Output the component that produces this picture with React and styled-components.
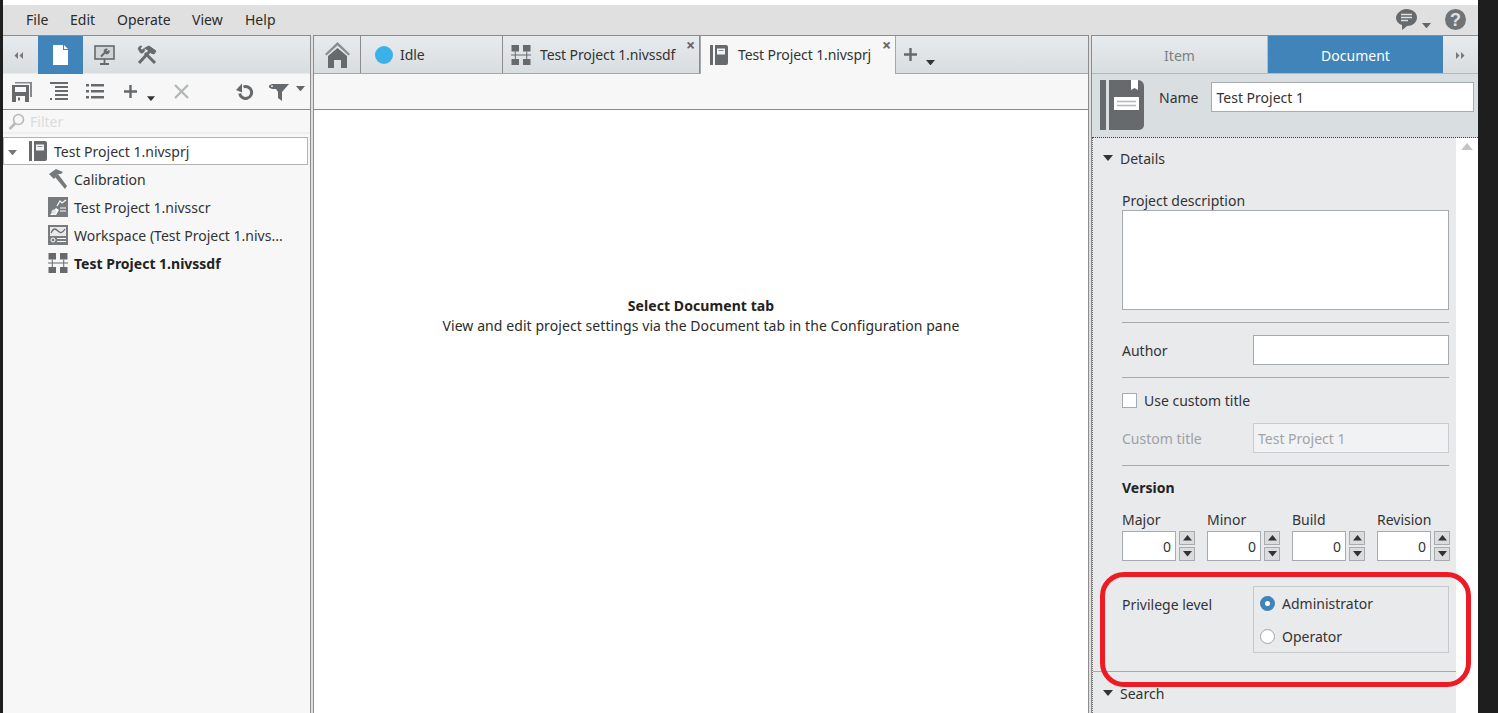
import React from 'react'
import styled, { createGlobalStyle } from 'styled-components'

const GlobalStyle = createGlobalStyle`
  html, body {
    margin: 0;
    padding: 0;
    height: 713px;
    overflow: hidden;
    background: #1e1e1e;
  }
  * { box-sizing: border-box; }
  body {
    font-family: "Noto Sans", "Open Sans", sans-serif;
    font-size: 14px;
    color: #333;
  }
`

const Window = styled.div`
  width: 1475px;
  height: 713px;
  margin-left: 3px;
  padding-top: 5px;
  background: #fff;
  display: flex;
  flex-direction: column;
  overflow: hidden;
  position: relative;
`

const MenuBar = styled.div`
  height: 30px;
  flex: none;
  background: #e0e0e0;
  display: flex;
  align-items: center;
  padding: 0 0 1px 23px;
`

const MenuItem = styled.span`
  width: ${p => p.$w}px;
  color: #2b2b2b;
`

const MenuRight = styled.div`
  margin-left: auto;
  display: flex;
  align-items: center;
  padding-right: 12px;
`

const Panes = styled.div`
  flex: 1;
  min-height: 0;
  display: flex;
  background: #e0e0e0;
`

const Pane = styled.div`
  width: ${p => p.$w}px;
  flex: none;
  border-top: 1px solid #8c8c8c;
  border-left: ${p => (p.$left ? '1px solid #8c8c8c' : 'none')};
  border-right: ${p => (p.$right ? '1px solid #8c8c8c' : 'none')};
  background: ${p => p.$bg};
  display: flex;
  flex-direction: column;
`

const Splitter = styled.div`
  width: 2px;
  flex: none;
`

const TabRow = styled.div`
  height: 38px;
  flex: none;
  display: flex;
  background: linear-gradient(#e8ebed, #d8dde0);
  border-bottom: 1px solid ${p => p.$line || '#a4a8ab'};
`

const NavTab = styled.div`
  width: ${p => p.$w}px;
  height: 38px;
  flex: none;
  display: flex;
  align-items: center;
  justify-content: center;
  padding-right: ${p => p.$shift || 0}px;
  background: ${p => (p.$on ? '#4084b9' : 'transparent')};
`

const DocTab = styled.div`
  width: ${p => p.$w}px;
  height: ${p => (p.$on ? '38px' : '37px')};
  flex: none;
  display: flex;
  align-items: center;
  gap: ${p => p.$gap || 8}px;
  padding: 0 0 ${p => (p.$on ? '1px' : 0)} ${p => p.$pad}px;
  background: ${p => (p.$on ? '#f7f7f7' : 'transparent')};
  border-right: 1px solid ${p => (p.$on ? '#a4a8ab' : '#8c8c8c')};
  border-left: ${p => (p.$on ? '1px solid #a4a8ab' : 'none')};
  letter-spacing: -0.1px;
  position: relative;
  z-index: 1;
`

const CloseMark = styled.span`
  position: absolute;
  top: 3px;
  right: 4px;
  font-size: 16px;
  line-height: 13px;
  font-weight: 700;
  color: #666;
`

const PropTab = styled.div`
  width: ${p => p.$w}px;
  flex: none;
  display: flex;
  align-items: center;
  justify-content: center;
  padding-top: 1px;
  background: ${p => (p.$on ? '#4084b9' : 'transparent')};
  color: ${p => (p.$on ? '#fff' : '#7b7f82')};
  border-right: ${p => (p.$line ? '1px solid #b9bdc0' : 'none')};
`

const Toolbar = styled.div`
  height: 36px;
  flex: none;
  background: #f7f7f7;
  border-bottom: 1px solid #8c8c8c;
  display: flex;
  align-items: center;
`

const ToolSlot = styled.span`
  width: ${p => p.$w}px;
  flex: none;
  display: flex;
  justify-content: center;
  align-items: center;
  margin-top: ${p => p.$drop || 0}px;
`

const FilterWrap = styled.span`
  display: flex;
  align-items: center;
  gap: 7px;
  margin-left: -13px;
`

const FilterRow = styled.div`
  height: 24px;
  flex: none;
  display: flex;
  align-items: center;
  gap: 5px;
  padding-left: 5px;
  background: #f7f7f7;
  border-bottom: 2px solid #efefef;
  color: #dcdcdc;
`

const Tree = styled.div`
  flex: 1;
  padding-top: 3px;
  background: #f7f7f7;
`

const RootRow = styled.div`
  height: 28px;
  width: 305px;
  display: flex;
  align-items: center;
  padding-left: 4px;
  background: #fff;
  border: 1px solid #b4b4b4;
`

const RootName = styled.span`
  margin-left: 7px;
`

const TreeRow = styled.div`
  height: 28px;
  display: flex;
  align-items: center;
  gap: 6px;
  padding-left: 45px;
  font-weight: ${p => (p.$bold ? 700 : 400)};
  color: ${p => (p.$bold ? '#222' : '#333')};
`

const Center = styled.div`
  flex: 1;
  background: #fff;
  display: flex;
  flex-direction: column;
  align-items: center;
  padding-top: 186px;
  line-height: 20px;
  color: #2b2b2b;
  letter-spacing: 0.08px;
`

const Heading = styled.div`
  font-weight: 700;
  color: #222;
`

const PropHeader = styled.div`
  height: 64px;
  flex: none;
  display: flex;
  background: #d9dee0;
  border-bottom: 1px dotted #444;
  padding: 6px 4px 0 8px;
`

const NameLabel = styled.span`
  margin: 8px 13px 0 15px;
  color: #333;
`

const NameBox = styled.div`
  flex: 1;
  height: 30px;
  margin-top: 2px;
  background: #fff;
  border: 1px solid #a8abae;
  line-height: 29px;
  padding: 0 4px;
`

const TextBox = styled.div`
  width: ${p => (p.$w ? `${p.$w}px` : 'auto')};
  height: ${p => p.$h || 30}px;
  flex: ${p => (p.$w ? 'none' : 1)};
  background: ${p => (p.$off ? '#f1f2f4' : '#fff')};
  border: 1px solid ${p => (p.$off ? '#c9cdd0' : '#a8abae')};
  color: ${p => (p.$off ? '#a0a4a8' : '#333')};
  line-height: ${p => (p.$h || 30) - 1}px;
  padding: 0 4px;
  text-align: ${p => (p.$num ? 'right' : 'left')};
`

const PropBody = styled.div`
  flex: 1;
  min-height: 0;
  display: flex;
  overflow: hidden;
`

const FormColumn = styled.div`
  width: 364px;
  flex: none;
  background: #e9eaec;
  border-left: 1px dotted #777;
`

const ScrollTrack = styled.div`
  flex: 1;
  background: #fff;
  display: flex;
  justify-content: center;
  padding-top: 5px;
`

const Disclosure = styled.div`
  height: 40px;
  display: flex;
  align-items: center;
  gap: 7px;
  padding-left: 10px;
`

const Form = styled.div`
  padding: 12px 7px 0 29px;
`

const Label = styled.div`
  height: 20px;
  line-height: 22px;
  color: ${p => (p.$off ? '#9da1a5' : '#333')};
`

const Rule = styled.div`
  height: 1px;
  background: #a8a9ab;
  margin: 12px 0;
`

const FieldRow = styled.div`
  display: grid;
  grid-template-columns: 131px 196px;
  align-items: center;
`

const CheckRow = styled.div`
  height: 24px;
  margin: -2px 0 11px;
  display: flex;
  align-items: center;
  gap: 7px;
`

const CheckBox = styled.span`
  width: 15px;
  height: 15px;
  background: #fff;
  border: 1px solid #a8abae;
`

const VersionTitle = styled.div`
  height: 20px;
  line-height: 22px;
  font-weight: 700;
  color: #222;
  margin-bottom: 12px;
  margin-top: -1px;
`

const VersionGrid = styled.div`
  display: grid;
  grid-template-columns: repeat(4, 73px);
  column-gap: 12px;
`

const SpinWrap = styled.div`
  display: flex;
  gap: 3px;
  margin-top: 2px;
`

const SpinButtons = styled.div`
  width: 16px;
  flex: none;
  display: flex;
  flex-direction: column;
  justify-content: space-between;
`

const SpinButton = styled.span`
  height: 14px;
  background: #dadcde;
  border: 1px solid #a8abae;
  display: flex;
  align-items: center;
  justify-content: center;
`

const PrivilegeRow = styled.div`
  display: grid;
  grid-template-columns: 131px 196px;
  margin-top: 25px;
`

const PrivilegeLabel = styled(Label)`
  margin-top: 8px;
`

const RadioGroup = styled.div`
  height: 67px;
  border: 1px solid #c6c9cc;
  padding: 0 0 0 6px;
`

const RadioRow = styled.div`
  height: 33px;
  display: flex;
  align-items: center;
  gap: 7px;
`

const Radio = styled.span`
  width: 15px;
  height: 15px;
  border-radius: 50%;
  background: #fff;
  border: ${p => (p.$on ? '5px solid #4084b9' : '1px solid #a0a3a6')};
`

const FullRule = styled.div`
  height: 1px;
  background: #a8a9ab;
  margin-top: 18px;
`

const SearchHead = styled(Disclosure)`
  padding-top: 2px;
`

const Callout = styled.div`
  position: absolute;
  left: 1097px;
  top: 572px;
  width: 371px;
  height: 115px;
  border: 5px solid #ed1c24;
  border-radius: 24px;
  pointer-events: none;
`

const StatusDot = styled.span`
  width: 18px;
  height: 18px;
  border-radius: 50%;
  background: #3cb0e8;
`

const Grey = '#666a6d'

const Caret = ({ size = 10, fill = '#333', up, style }) => (
  <svg width={size} height={size * 0.6} viewBox="0 0 10 6" style={style}>
    <path d={up ? 'M0 6h10L5 0z' : 'M0 0h10L5 6z'} fill={fill} />
  </svg>
)

const PageIcon = () => (
  <svg width="17" height="20" viewBox="0 0 17 20">
    <path d="M1 0h10v5h5v15H1z" fill="#fff" />
    <path d="M12 0l4 4h-4z" fill="#fff" />
  </svg>
)

const MonitorIcon = () => (
  <svg width="21" height="20" viewBox="0 0 21 20" fill="none" stroke={Grey}>
    <rect x="1" y="1" width="19" height="13" strokeWidth="1.600" fill="#d0d4d6" />
    <path d="M6 19h9M10.500 14v5" strokeWidth="1.800" />
    <path d="M7 11.500l4-4" strokeWidth="2" />
    <path d="M10 7a2.500 2.500 0 0 1 3.500-3l-1 1.500 1 1L15 5a2.500 2.500 0 0 1-4 3z" fill={Grey} strokeWidth="0.500" />
  </svg>
)

const ToolsIcon = () => (
  <svg width="20" height="20" viewBox="0 0 20 20" fill="none" stroke={Grey}>
    <path d="M2 18L13 6" strokeWidth="3" />
    <path d="M8 3l4-2 7 5-2 3-3-1-2-2z" fill={Grey} strokeWidth="1" />
    <path d="M18 18L8 8" strokeWidth="3" />
    <path d="M1 4a3.500 3.500 0 0 1 4-3L3.500 3.500 5 5l2.500-2a3.500 3.500 0 0 1-4 5z" fill={Grey} strokeWidth="0.500" />
  </svg>
)

const SaveIcon = () => (
  <svg width="20" height="20" viewBox="0 0 20 20" fill="none">
    <path d="M3 0h17v15h-2V1.500H3z" fill="#85898c" />
    <path d="M0 3h17v17H0z" fill={Grey} />
    <path d="M3 5h11v5H3zM4 14h9v6H4z" fill="#f7f7f7" />
    <rect x="6" y="15.500" width="2" height="3" fill={Grey} />
  </svg>
)

const IndentListIcon = () => (
  <svg width="18" height="19" viewBox="0 0 18 19" fill={Grey}>
    <path d="M0 0h18v2H0zM5 4h13v2H5zM5 8h13v2H5zM5 12h13v2H5zM0 16h2v2H0zM5 16h13v2H5z" />
  </svg>
)

const ListIcon = () => (
  <svg width="18" height="15" viewBox="0 0 18 15" fill={Grey}>
    <path d="M0 0h3v2.500H0zM5 0h13v2.500H5zM0 6h3v2.500H0zM5 6h13v2.500H5zM0 12h3v2.500H0zM5 12h13v2.500H5z" />
  </svg>
)

const PlusIcon = () => (
  <svg width="13" height="13" viewBox="0 0 13 13" fill={Grey}>
    <path d="M5.300 0h2.400v5.300H13v2.400H7.700V13H5.300V7.700H0V5.300h5.300z" />
  </svg>
)

const CrossIcon = () => (
  <svg width="15" height="15" viewBox="0 0 15 15" stroke="#b4b7ba" strokeWidth="2.400">
    <path d="M1 1l13 13M14 1L1 14" />
  </svg>
)

const UndoIcon = () => (
  <svg width="18" height="17" viewBox="0 0 18 17" fill="none">
    <path d="M7.500 3.800a6 6 0 1 1-3.800 6.700" stroke={Grey} strokeWidth="3" />
    <path d="M0 7L6 0.500v9z" fill={Grey} />
  </svg>
)

const FilterIcon = () => (
  <svg width="20" height="18" viewBox="0 0 20 18" fill={Grey}>
    <path d="M0 2.500L3 1h17l-7 8v9l-4-3V9L7 6H3L0 4.500z" />
    <circle cx="3" cy="3.200" r="0.900" fill="#f7f7f7" />
  </svg>
)

const SearchIcon = () => (
  <svg width="17" height="17" viewBox="0 0 17 17" fill="none" stroke="#b9b9b9">
    <circle cx="10.500" cy="6.500" r="5" strokeWidth="1.600" />
    <path d="M7 10.500L1.500 16" strokeWidth="2.600" />
  </svg>
)

const SmallBookIcon = () => (
  <svg width="18" height="20" viewBox="0 0 18 20">
    <path d="M0 0h3v20H0z" fill={Grey} />
    <path d="M5 0h11a2 2 0 0 1 2 2v16a2 2 0 0 1-2 2H5z" fill={Grey} />
    <path d="M7 3.500h8v6H7z" fill="#f2f2f2" />
    <path d="M8.500 5.500h5" stroke="#8a8e91" />
  </svg>
)

const BigBookIcon = () => (
  <svg width="44" height="50" viewBox="0 0 44 50">
    <path d="M0 0h6v50H0z" fill={Grey} />
    <path d="M9 0h29a6 6 0 0 1 6 6v39a5 5 0 0 1-5 5H9z" fill={Grey} />
    <path d="M31 0h7v10l-3.500-2-3.500 2z" fill="#fff" />
    <path d="M14 17h25v13H14z" fill="#fff" />
    <path d="M17 21.500h19M17 25.500h19" stroke="#b5b8ba" strokeWidth="1.500" />
  </svg>
)

const HammerIcon = () => (
  <svg width="20" height="20" viewBox="0 0 20 20" fill="#75797c">
    <path d="M1 5l7-5 7 3-2 2-3 0-4 5z" />
    <path d="M7 8l3-3 9 12-2 3z" />
  </svg>
)

const ScreenIcon = () => (
  <svg width="20" height="20" viewBox="0 0 20 20">
    <rect width="20" height="20" fill="#777b7e" />
    <path d="M9 9l3-5 2 2 4-3" fill="none" stroke="#fff" strokeWidth="1.200" />
    <path d="M12 11h6M12 14h6" stroke="#fff" strokeWidth="1" />
    <path d="M2 18l6-7 3 2-3 5z" fill="#fff" />
    <circle cx="6" cy="15" r="2.500" fill="#e6e6e6" />
  </svg>
)

const WorkspaceIcon = () => (
  <svg width="20" height="20" viewBox="0 0 20 20">
    <rect width="20" height="20" fill="#777b7e" />
    <rect x="2" y="2" width="16" height="9" fill="#e9e9e9" />
    <path d="M3 8c3-6 5-4 7-2s4 3 7-2" fill="none" stroke={Grey} strokeWidth="1.300" />
    <circle cx="5" cy="15" r="2" fill="none" stroke="#fff" />
    <path d="M9 13.500h9M9 16.500h9" stroke="#fff" />
  </svg>
)

const SystemIcon = () => (
  <svg width="20" height="20" viewBox="0 0 20 20" fill={Grey}>
    <path d="M0.500 0h7.500v6.500H0.500zM12 0h7.500v6.500H12zM0.500 14h7.500v6H0.500zM12 14h7.500v6H12z" />
    <path d="M0 9.500h20v1H0zM3.800 6.500h1v7.500h-1zM15.200 6.500h1v7.500h-1z" />
  </svg>
)

const HomeIcon = () => (
  <svg width="25" height="26" viewBox="0 0 25 26" fill={Grey}>
    <path d="M12.500 0L25 12l-1.500 1.500-11-10-11 10L0 12z" fill="#8a8e91" />
    <path d="M12.500 6L22 14v12h-6v-8H9v8H3V14z" />
  </svg>
)

const CommentIcon = () => (
  <svg width="21" height="21" viewBox="0 0 21 21">
    <path d="M10.500 0C16 0 21 3.500 21 8.500S16 17 11 17l-5 4v-5C2.500 15 0 12 0 8.500S5 0 10.500 0z" fill={Grey} />
    <path d="M5 5.500h11M5 8.500h11M5 11.500h7" stroke="#e0e0e0" strokeWidth="1.500" />
  </svg>
)

const HelpIcon = () => (
  <svg width="21" height="21" viewBox="0 0 21 21">
    <circle cx="10.500" cy="10.500" r="10.500" fill="#6f7376" />
    <text x="10.500" y="16.500" textAnchor="middle" fontSize="18" fontWeight="700" fill="#e0e0e0" fontFamily="Liberation Sans">?</text>
  </svg>
)

const Chevrons = ({ left }) => (
  <svg width="9" height="7" viewBox="0 0 9 7" fill="#777" style={{ transform: left ? 'scaleX(-1)' : 'none' }}>
    <path d="M0 0l3.500 3.500L0 7zM5 0l3.500 3.500L5 7z" />
  </svg>
)

const SpinField = ({ label }) => (
  <div>
    <Label>{label}</Label>
    <SpinWrap>
      <TextBox $w={54} $num>0</TextBox>
      <SpinButtons>
        <SpinButton><Caret size={9} up /></SpinButton>
        <SpinButton><Caret size={9} /></SpinButton>
      </SpinButtons>
    </SpinWrap>
  </div>
)

export default function App() {
  return (
    <>
      <GlobalStyle />
      <Window>
        <MenuBar>
          <MenuItem $w={44}>File</MenuItem>
          <MenuItem $w={47}>Edit</MenuItem>
          <MenuItem $w={75}>Operate</MenuItem>
          <MenuItem $w={53}>View</MenuItem>
          <MenuItem $w={40}>Help</MenuItem>
          <MenuRight>
            <CommentIcon />
            <Caret size={9} fill="#666" style={{ margin: '12px 14px 0 5px' }} />
            <HelpIcon />
          </MenuRight>
        </MenuBar>
        <Panes>
          <Pane $w={308} $right $bg="#f7f7f7">
            <TabRow $line="transparent">
              <NavTab $w={35} $shift={4}><Chevrons left /></NavTab>
              <NavTab $w={45} $on><PageIcon /></NavTab>
              <NavTab $w={42}><MonitorIcon /></NavTab>
              <NavTab $w={44}><ToolsIcon /></NavTab>
            </TabRow>
            <Toolbar>
              <ToolSlot $w={38}><SaveIcon /></ToolSlot>
              <ToolSlot $w={36}><IndentListIcon /></ToolSlot>
              <ToolSlot $w={36}><ListIcon /></ToolSlot>
              <ToolSlot $w={34}><PlusIcon /></ToolSlot>
              <ToolSlot $w={8} $drop={14}><Caret size={9} /></ToolSlot>
              <ToolSlot $w={52}><CrossIcon /></ToolSlot>
              <ToolSlot $w={75}><UndoIcon /></ToolSlot>
              <FilterWrap>
                <FilterIcon />
                <Caret size={9} fill="#666" style={{ marginBottom: 6 }} />
              </FilterWrap>
            </Toolbar>
            <FilterRow><SearchIcon />Filter</FilterRow>
            <Tree>
              <RootRow>
                <Caret size={9} fill="#777" style={{ margin: '3px 12px 0 0' }} />
                <SmallBookIcon />
                <RootName>Test Project 1.nivsprj</RootName>
              </RootRow>
              <TreeRow><HammerIcon />Calibration</TreeRow>
              <TreeRow><ScreenIcon />Test Project 1.nivsscr</TreeRow>
              <TreeRow><WorkspaceIcon />Workspace (Test Project 1.nivs...</TreeRow>
              <TreeRow $bold><SystemIcon />Test Project 1.nivssdf</TreeRow>
            </Tree>
          </Pane>
          <Splitter />
          <Pane $w={776} $left $right $bg="#fff">
            <TabRow>
              <DocTab $w={47} $pad={11}><HomeIcon /></DocTab>
              <DocTab $w={142} $pad={14} $gap={7}><StatusDot />Idle</DocTab>
              <DocTab $w={197} $pad={8} $gap={9}>
                <SystemIcon />Test Project 1.nivssdf<CloseMark>×</CloseMark>
              </DocTab>
              <DocTab $w={196} $pad={9} $gap={10} $on>
                <SmallBookIcon />Test Project 1.nivsprj<CloseMark>×</CloseMark>
              </DocTab>
              <ToolSlot $w={28}><PlusIcon /></ToolSlot>
              <ToolSlot $w={12} $drop={16}><Caret size={9} /></ToolSlot>
            </TabRow>
            <Toolbar />
            <Center>
              <Heading>Select Document tab</Heading>
              <div>View and edit project settings via the Document tab in the Configuration pane</div>
            </Center>
          </Pane>
          <Splitter />
          <Pane $w={387} $left $bg="#d9dee0">
            <TabRow $line="#b4b8bb">
              <PropTab $w={176} $line>Item</PropTab>
              <PropTab $w={175} $on>Document</PropTab>
              <PropTab $w={35}><Chevrons /></PropTab>
            </TabRow>
            <PropHeader>
              <BigBookIcon />
              <NameLabel>Name</NameLabel>
              <NameBox>Test Project 1</NameBox>
            </PropHeader>
            <PropBody>
              <FormColumn>
                <Disclosure><Caret size={10} />Details</Disclosure>
                <Form>
                  <Label>Project description</Label>
                  <TextBox $h={100} />
                  <Rule />
                  <FieldRow>
                    <Label>Author</Label>
                    <TextBox />
                  </FieldRow>
                  <Rule />
                  <CheckRow><CheckBox />Use custom title</CheckRow>
                  <FieldRow>
                    <Label $off>Custom title</Label>
                    <TextBox $off>Test Project 1</TextBox>
                  </FieldRow>
                  <Rule />
                  <VersionTitle>Version</VersionTitle>
                  <VersionGrid>
                    <SpinField label="Major" />
                    <SpinField label="Minor" />
                    <SpinField label="Build" />
                    <SpinField label="Revision" />
                  </VersionGrid>
                  <PrivilegeRow>
                    <PrivilegeLabel>Privilege level</PrivilegeLabel>
                    <RadioGroup>
                      <RadioRow><Radio $on />Administrator</RadioRow>
                      <RadioRow><Radio />Operator</RadioRow>
                    </RadioGroup>
                  </PrivilegeRow>
                </Form>
                <FullRule />
                <SearchHead><Caret size={10} />Search</SearchHead>
              </FormColumn>
              <ScrollTrack><Caret size={12} up fill="#c2c5c8" /></ScrollTrack>
            </PropBody>
          </Pane>
        </Panes>
        <Callout />
      </Window>
    </>
  )
}
